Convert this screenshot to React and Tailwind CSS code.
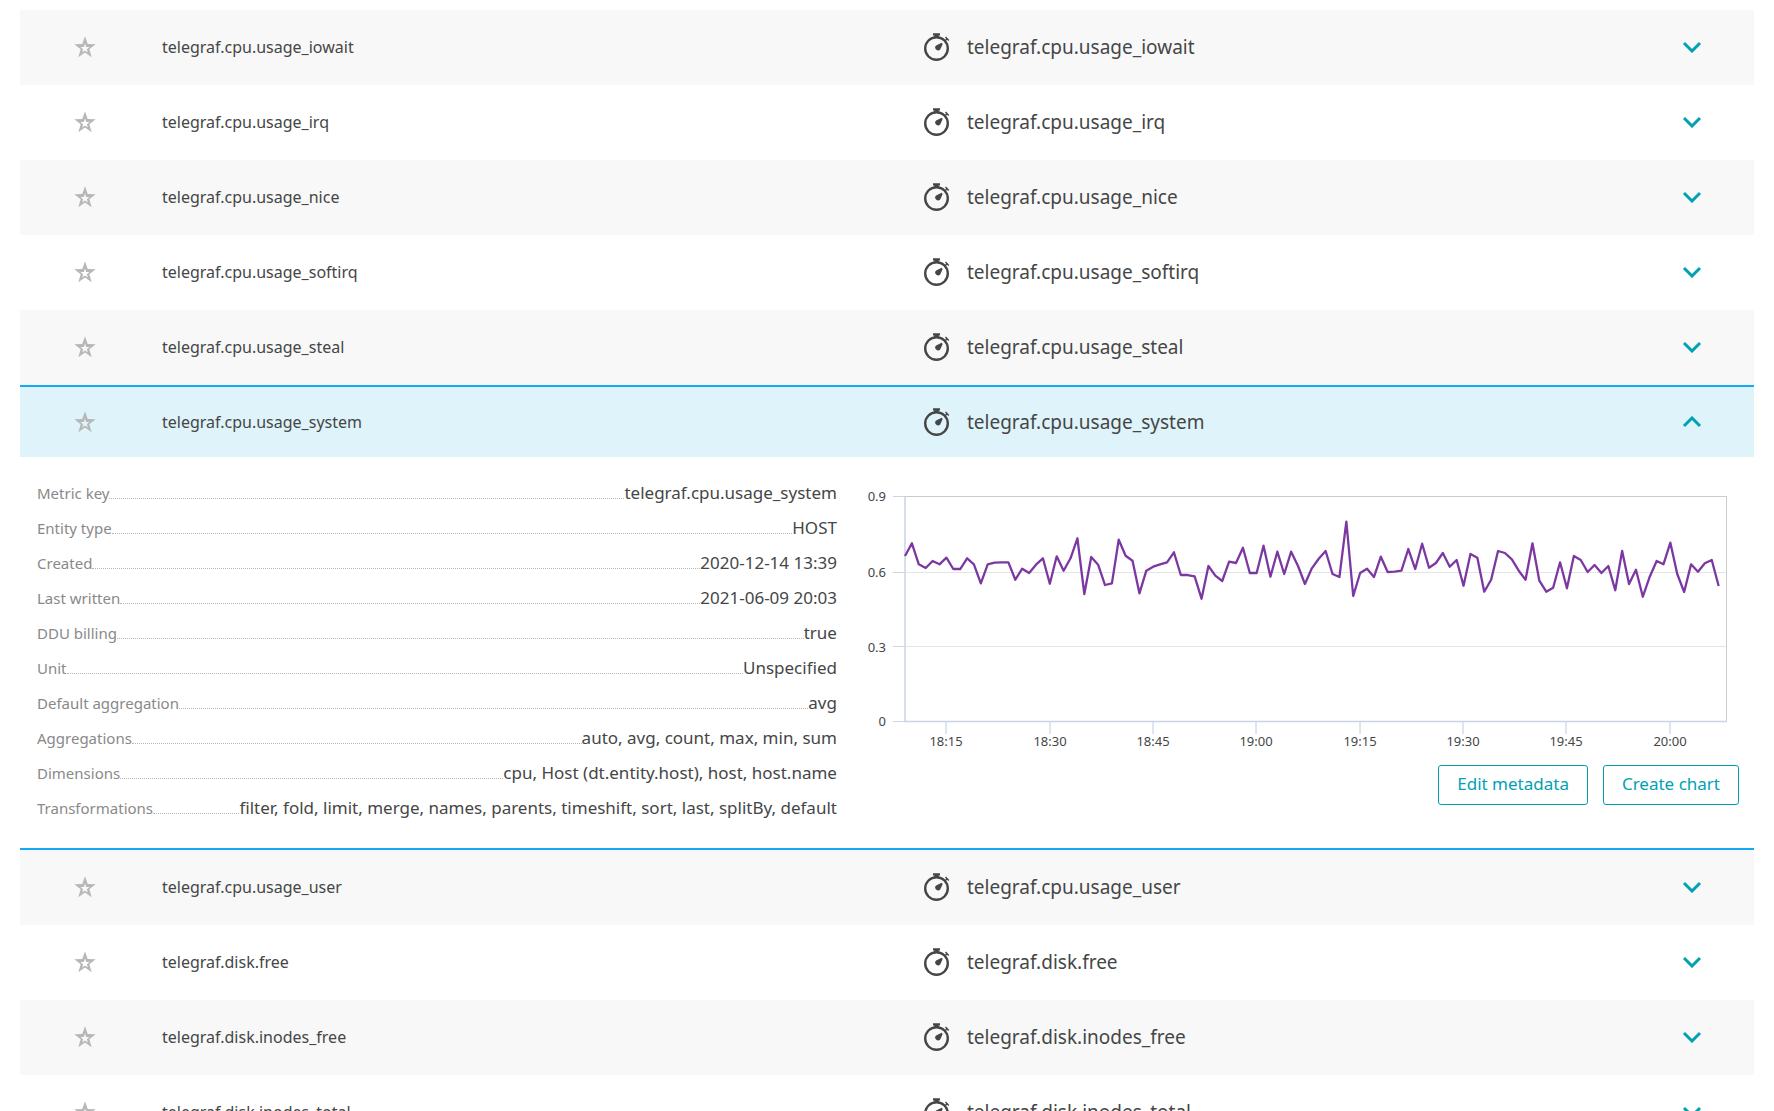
import { Fragment, useState } from "react";

const METRICS = [
  "telegraf.cpu.usage_iowait",
  "telegraf.cpu.usage_irq",
  "telegraf.cpu.usage_nice",
  "telegraf.cpu.usage_softirq",
  "telegraf.cpu.usage_steal",
  "telegraf.cpu.usage_system",
  "telegraf.cpu.usage_user",
  "telegraf.disk.free",
  "telegraf.disk.inodes_free",
  "telegraf.disk.inodes_total",
];

const DETAILS = [
  ["Metric key", "telegraf.cpu.usage_system"],
  ["Entity type", "HOST"],
  ["Created", "2020-12-14 13:39"],
  ["Last written", "2021-06-09 20:03"],
  ["DDU billing", "true"],
  ["Unit", "Unspecified"],
  ["Default aggregation", "avg"],
  ["Aggregations", "auto, avg, count, max, min, sum"],
  ["Dimensions", "cpu, Host (dt.entity.host), host, host.name"],
  ["Transformations", "filter, fold, limit, merge, names, parents, timeshift, sort, last, splitBy, default"],
];

// One sample per minute, as thirds of a pixel below the chart's upper edge.
const SAMPLES = [
  228, 190, 253, 264, 243, 253, 233, 267, 267, 235, 253, 310, 253, 248, 247, 247, 299, 266, 279, 254,
  235, 311, 229, 272, 235, 175, 342, 231, 254, 315, 310, 179, 227, 242, 340, 272, 260, 253, 247, 217,
  285, 285, 289, 356, 258, 287, 303, 245, 249, 203, 279, 279, 197, 290, 215, 282, 215, 258, 312, 265,
  236, 213, 282, 291, 125, 348, 279, 266, 291, 230, 276, 275, 272, 207, 267, 191, 263, 249, 219, 260,
  240, 317, 222, 233, 335, 299, 213, 219, 238, 272, 299, 190, 302, 335, 323, 247, 325, 228, 240, 276,
  255, 279, 258, 331, 213, 312, 269, 350, 290, 243, 253, 188, 282, 336, 253, 275, 250, 240, 318,
];

const Y_TICKS = [
  ["0.9", 19],
  ["0.6", 95],
  ["0.3", 170],
  ["0", 244],
];
const X_TICKS = [
  ["18:15", 109],
  ["18:30", 213],
  ["18:45", 316],
  ["19:00", 419],
  ["19:15", 523],
  ["19:30", 626],
  ["19:45", 729],
  ["20:00", 833],
];

function Star() {
  return (
    <svg viewBox="0 0 22 22" className="size-[22px]" fill="#b7b7b7" aria-hidden="true">
      <path
        fillRule="evenodd"
        d="M11 .2l2.7 7.9 8 .2-6.4 4.9 2.4 8.1-6.7-4.8-6.7 4.8 2.4-8.1L.3 8.3l8-.2zM11 7.6L9.8 11l-3.3.1 2.6 2.1-.9 3.2L11 14.6l2.8 1.8-.9-3.2 2.6-2.1-3.3-.1z"
      />
    </svg>
  );
}

function Stopwatch() {
  return (
    <svg viewBox="0 0 26 28" className="h-7 w-[26px] shrink-0" fill="#454646" aria-hidden="true">
      <circle cx="12.5" cy="15.5" r="11.3" fill="none" stroke="#454646" strokeWidth="2.4" />
      <path d="M9 .3h7v2.3h-1.3V5h-4.4V2.6H9z" />
      <path d="M21 4.6l1-1 3.3 3.3-1 1-1.2-1.2-1.7 1.7-1-1 1.7-1.7z" />
      <path d="M17.6 9.800l1.100 1.100-2.500 5.600a2.800 2.800 0 1 1-4.100-4.100z" />
    </svg>
  );
}

function Chevron({ up }) {
  return (
    <svg viewBox="0 0 20 12" className="h-3 w-5" fill="none" stroke="#00a1b2" strokeWidth="3" aria-hidden="true">
      <path d={up ? "M2 10l8-8 8 8" : "M2 2l8 8 8-8"} />
    </svg>
  );
}

function Chart() {
  const points = SAMPLES.map((y, i) => `${(68 + i * 6.895).toFixed(1)},${(3 + y / 3).toFixed(1)}`).join(" ");
  return (
    <svg viewBox="0 0 902 280" className="block h-auto w-full" role="img" aria-label="telegraf.cpu.usage_system">
      <g fill="none" strokeWidth="1" shapeRendering="crispEdges">
        <path d="M67 95.5H889M67 169.5H889" stroke="#e3e4e6" />
        <path d="M67 19.5H889.5V244" stroke="#cccccc" />
        <path d="M56 19.5h11M56 95.5h11M56 169.5h11M56 244.5h11" stroke="#ccd6eb" />
      </g>
      <path d="M68 19V245M67 244.5H890" fill="none" stroke="#ccd3e6" strokeWidth="1.5" />
      {X_TICKS.map(([label, x]) => (
        <g key={label}>
          <path d={`M${x} 245v12`} stroke="#d3ddef" strokeWidth="1.5" />
          <text x={x} y="269" textAnchor="middle" fontSize="13" fill="#454646">
            {label}
          </text>
        </g>
      ))}
      {Y_TICKS.map(([label, y]) => (
        <text key={label} x="49" y={y + 5} textAnchor="end" fontSize="13" fill="#454646">
          {label}
        </text>
      ))}
      <polyline points={points} fill="none" stroke="#7c38a1" strokeWidth="2.3" strokeLinejoin="round" />
    </svg>
  );
}

function ActionButton({ children }) {
  return (
    <button
      type="button"
      className="h-10 rounded-[3px] border border-[#00a1b2] bg-white px-[18px] pb-[3px] text-[17px] leading-6 text-[#00a1b2]"
    >
      {children}
    </button>
  );
}

function Details() {
  return (
    <div className="grid grid-cols-[47fr_53fr] pt-5 pr-[15px] pb-[21px] pl-[17px]">
      <dl>
        {DETAILS.map(([label, value]) => (
          <div key={label} className="flex h-[35px] items-center">
            <dt className="pb-[3px] text-[15px] leading-5 whitespace-nowrap text-[#898989]">{label}</dt>
            <span className="mt-2 flex-1 border-b border-dotted border-[#b7b7b7]" />
            <dd className="pb-[3px] text-[17px] leading-6 whitespace-nowrap text-[#454646]">{value}</dd>
          </div>
        ))}
      </dl>
      <div>
        <Chart />
        <div className="mt-2 flex justify-end gap-[15px]">
          <ActionButton>Edit metadata</ActionButton>
          <ActionButton>Create chart</ActionButton>
        </div>
      </div>
    </div>
  );
}

export default function App() {
  const [open, setOpen] = useState("telegraf.cpu.usage_system");
  return (
    <main className="h-screen overflow-hidden bg-white px-5 pt-2.5 font-['Noto_Sans','Open_Sans',sans-serif] text-[#454646]">
      <table className="w-full table-fixed border-separate border-spacing-0 text-left">
        <colgroup>
          <col className="w-[140px]" />
          <col className="w-[44%]" />
          <col />
          <col className="w-[125px]" />
        </colgroup>
        <tbody>
          {METRICS.map((name, i) => {
            const active = open === name;
            const cell = active
              ? "h-[72px] border-t-2 border-[#14a8f5] bg-[#dff3fa] p-0"
              : i % 2 === 0
                ? "h-[75px] bg-[#f8f8f8] px-0 pt-0 pb-0.5"
                : "h-[75px] bg-white px-0 pt-0 pb-0.5";
            return (
              <Fragment key={name}>
                <tr>
                  <td className={cell}>
                    <button type="button" aria-label={`Favorite ${name}`} className="ml-[54px] block">
                      <Star />
                    </button>
                  </td>
                  <td className={cell}>
                    <span className="block pl-0.5 text-[16px] leading-6">{name}</span>
                  </td>
                  <td className={cell}>
                    <span className="flex items-center gap-[17px] pl-px text-[19px] leading-7">
                      <Stopwatch />
                      {name}
                    </span>
                  </td>
                  <td className={cell}>
                    <button
                      type="button"
                      aria-expanded={active}
                      aria-label={`Details of ${name}`}
                      onClick={() => setOpen(active ? "" : name)}
                      className="mx-auto block"
                    >
                      <Chevron up={active} />
                    </button>
                  </td>
                </tr>
                {active && (
                  <tr>
                    <td colSpan={4} className="border-b-2 border-[#14a8f5] p-0">
                      <Details />
                    </td>
                  </tr>
                )}
              </Fragment>
            );
          })}
        </tbody>
      </table>
    </main>
  );
}
